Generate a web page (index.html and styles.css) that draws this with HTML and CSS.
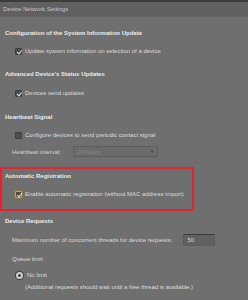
FILE: index.html
```html
<!DOCTYPE html>
<html lang="en">
<head>
    <meta charset="UTF-8">
    <title>Device Network Settings</title>
    <link rel="stylesheet" href="styles.css">
</head>
<body>
    <div class="titlebar">Device Network Settings</div>

    <div class="content">
        <div class="section">
            <h3>Configuration of the System Information Update</h3>
            <label class="row check"><span class="box checked"></span>Update system information on selection of a device</label>
        </div>

        <div class="section">
            <h3>Advanced Device's Status Updates</h3>
            <label class="row check"><span class="box checked"></span>Devices send updates</label>
        </div>

        <div class="section">
            <h3>Heartbeat Signal</h3>
            <label class="row check"><span class="box"></span>Configure devices to send periodic contact signal</label>
            <div class="row field interval">
                <span class="muted">Heartbeat interval:</span>
                <div class="dropdown"><span>24 hours</span><span class="arrow">&#9660;</span></div>
            </div>
        </div>

        <div class="section highlight">
            <h3>Automatic Registration</h3>
            <label class="row check"><span class="box checked focus"></span>Enable automatic registration (without MAC address import)</label>
        </div>

        <div class="section last">
            <h3>Device Requests</h3>
            <div class="row field threads">
                <span>Maximum number of concurrent threads for device requests:</span>
                <div class="input">50</div>
            </div>
            <div class="row field queue">Queue limit:</div>
            <label class="row radio"><span class="dot"></span>No limit</label>
            <div class="row note">(Additional requests should wait until a free thread is available.)</div>
        </div>
    </div>

    <div class="footer"></div>
</body>
</html>
```

FILE: styles.css
```css
* {
    margin: 0;
    padding: 0;
    box-sizing: border-box;
    font-family: 'Liberation Sans', Arial, sans-serif;
}

body {
    width: 248px;
    height: 300px;
    background: #6f6f6f;
    color: #dcdcdc;
    font-size: 6px;
    overflow: hidden;
    display: flex;
    flex-direction: column;
}

.titlebar {
    height: 17px;
    border-top: 2px solid #3c3c3c;
    background: #606060;
    border-bottom: 1px solid #666;
    color: #c8c8c8;
    line-height: 14px;
    padding-left: 3px;
}

.content {
    flex: 1;
    padding-top: 11px;
}

.section {
    display: flex;
    flex-direction: column;
    gap: 8px;
    padding: 0 0 13px 5px;
}

.section:nth-child(2) {
    gap: 9px;
    padding-bottom: 14px;
}

h3 {
    font-size: 6px;
    font-weight: bold;
    color: #ececec;
    line-height: 10px;
}

.row {
    display: flex;
    align-items: center;
    line-height: 10px;
    height: 10px;
}

.check {
    padding-left: 10px;
}

.box {
    width: 7px;
    height: 7px;
    margin-right: 3px;
    background: #4d4d4d;
    border: 1px solid #3e3e3e;
    border-radius: 1px;
    position: relative;
}

.box.checked::after {
    content: "";
    position: absolute;
    left: 2px;
    top: 0;
    width: 2px;
    height: 4px;
    border: solid #e0e0e0;
    border-width: 0 1px 1px 0;
    transform: rotate(40deg);
}

.box.focus {
    border-color: #c8a43a;
    box-shadow: 0 0 0 1px #8c7a3c;
}

.interval {
    margin-top: -2px;
    padding-left: 7px;
    height: 11px;
}

.muted {
    color: #d4d4d4;
    width: 61px;
}

.dropdown {
    width: 85px;
    height: 11px;
    display: flex;
    justify-content: space-between;
    align-items: center;
    padding: 0 3px;
    background: #6b6b6b;
    border: 1px solid #5c5c5c;
    border-radius: 1px;
    color: #878787;
}

.arrow {
    font-size: 4px;
    color: #3a3a3a;
}

.section:nth-child(3) {
    padding-bottom: 14px;
}

.highlight {
    width: 194px;
    margin-top: -4px;
    padding: 2px 0 10px 3px;
    border: 2px solid #e5232c;
    margin-bottom: 5px;
}

.highlight .check {
    padding-left: 10px;
}

.last {
    gap: 0;
}

.threads {
    margin-top: 8px;
    height: 12px;
    padding-left: 7px;
}

.input {
    width: 32px;
    height: 12px;
    margin-left: 11px;
    padding-left: 3px;
    background: #616161;
    border: 1px solid #5a5a5a;
    border-top-color: #3c3c3c;
    color: #d6d6d6;
    line-height: 10px;
}

.queue {
    margin-top: 8px;
    padding-left: 7px;
}

.radio {
    margin-top: 6px;
    padding-left: 11px;
}

.dot {
    width: 7px;
    height: 7px;
    margin-right: 4px;
    border-radius: 50%;
    background: #3f3f3f;
    border: 2px solid #d0d0d0;
    box-shadow: 0 0 0 1px #3f3f3f;
}

.note {
    margin-top: 2px;
    padding-left: 20px;
}

.footer {
    height: 4px;
    background: #4a4a4a;
}
```
